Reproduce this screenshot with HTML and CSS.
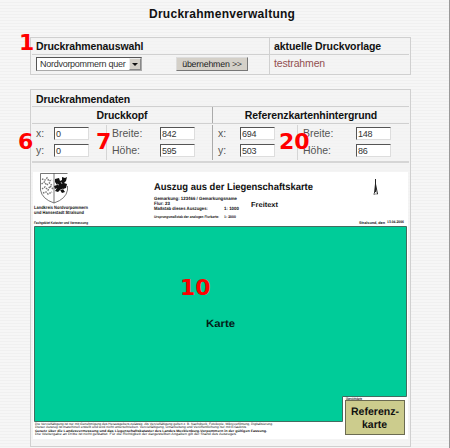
FILE: index.html
```html
<!DOCTYPE html>
<html lang="de">
<head>
<meta charset="utf-8">
<title>Druckrahmenverwaltung</title>
<link rel="stylesheet" href="styles.css">
</head>
<body>
<main class="page">
  <h1>Druckrahmenverwaltung</h1>
  <section class="panel selection">
    <div class="head cell">Druckrahmenauswahl</div>
    <div class="head cell template">aktuelle Druckvorlage</div>
    <div class="cell chooser">
      <div class="select"><span>Nordvorpommern quer</span><i class="drop"></i></div>
      <button type="button">übernehmen &gt;&gt;</button>
    </div>
    <div class="cell template name">testrahmen</div>
  </section>
  <section class="panel data">
    <div class="head data-title">Druckrahmendaten</div>
    <div class="groups">
      <div class="head group-title">Druckkopf</div>
      <div class="head group-title right">Referenzkartenhintergrund</div>
    </div>
    <div class="fields">
      <div class="pair p1"><label>x:</label><span class="input">0</span><label>y:</label><span class="input">0</span></div>
      <div class="pair p2"><label>Breite:</label><span class="input">842</span><label>Höhe:</label><span class="input">595</span></div>
      <div class="pair p3"><label>x:</label><span class="input">694</span><label>y:</label><span class="input">503</span></div>
      <div class="pair p4"><label>Breite:</label><span class="input">148</span><label>Höhe:</label><span class="input">86</span></div>
    </div>
    <div class="preview">
      <svg width="375" height="267" viewBox="33 172 375 267">
        <rect x="33" y="172" width="375" height="267" fill="#fff"/>
        <g fill="none" stroke="#555" stroke-width=".8">
          <path d="M40.500 173.500H67.500M40.500 173.500V190Q42 199 54 203Q66 199 67.500 190V186"/>
          <path d="M54 173V203"/>
        </g>
        <path d="M42 179l3 1 2-2 2 3 3-1M41.500 184l3-2 2 3 3-2 3 3M42 189l3-2 3 3 2-4 3 3M43 193l3-1 2 2 4-2" fill="none" stroke="#777" stroke-width="1.500" stroke-dasharray="1.500 1"/>
        <path d="M55 179l4-1 1 3 2-1 0-3 3 1 2-1-1 4-2 2 3 1-1 4-3 1 2 3-3 1-2-3-2 2-3-1 2-3-2 1-1-3 3-1-2-3z" fill="#111"/>
        <path d="M57 184l2 1M61 182l1 2M60 190l3-1" stroke="#fff" stroke-width=".6"/>
        <g class="tiny">
          <text x="34" y="208.500" textLength="54" lengthAdjust="spacingAndGlyphs">Landkreis Nordvorpommern</text>
          <text x="34" y="214" textLength="50" lengthAdjust="spacingAndGlyphs">und Hansestadt Stralsund</text>
        </g>
        <text class="micro" x="34" y="224" textLength="54" lengthAdjust="spacingAndGlyphs">Fachgebiet Kataster und Vermessung</text>
        <text class="map-title" x="154" y="189.500" textLength="159" lengthAdjust="spacingAndGlyphs">Auszug aus der Liegenschaftskarte</text>
        <g class="tiny">
          <text x="154" y="199.500" textLength="83" lengthAdjust="spacingAndGlyphs">Gemarkung: 123466 / Gemarkungsname</text>
          <text x="154" y="204.500" textLength="16" lengthAdjust="spacingAndGlyphs">Flur: 23</text>
          <text x="154" y="210" textLength="54" lengthAdjust="spacingAndGlyphs">Maßstab dieses Auszuges:</text>
          <text x="224" y="210" textLength="15" lengthAdjust="spacingAndGlyphs">1: 1000</text>
        </g>
        <g class="micro">
          <text x="154" y="218" textLength="65" lengthAdjust="spacingAndGlyphs">Ursprungsmaßstab der analogen Flurkarte:</text>
          <text x="224" y="217.500" textLength="12" lengthAdjust="spacingAndGlyphs">1: 2000</text>
          <text x="359" y="223.500" textLength="26" lengthAdjust="spacingAndGlyphs">Stralsund, den</text>
          <text x="387" y="223" textLength="17" lengthAdjust="spacingAndGlyphs">13.04.2006</text>
        </g>
        <text class="free" x="251" y="206.500" textLength="27" lengthAdjust="spacingAndGlyphs">Freitext</text>
        <path d="M375.500 179V192M375.500 184L374.500 193M375.500 184L377.500 194M373.500 194h2M376.500 194h1" stroke="#222" fill="none"/>
        <path d="M34.500 226.500H406.500V396.500H342.500V421.500H34.500Z" fill="#00cc99" stroke="#426c60"/>
        <text class="map-label" x="206" y="327" textLength="29" lengthAdjust="spacingAndGlyphs">Karte</text>
        <text class="micro" x="346" y="399.500" textLength="16" lengthAdjust="spacingAndGlyphs">Übersichtskarte</text>
        <g class="legal">
          <text x="35" y="425" textLength="238" lengthAdjust="spacingAndGlyphs">Die Vervielfältigung ist nur mit Genehmigung des Herausgebers zulässig. Als Vervielfältigung gelten z. B. Nachdruck, Fotokopie, Mikroverfilmung, Digitalisierung.</text>
          <text x="35" y="428.300" textLength="212" lengthAdjust="spacingAndGlyphs">Dieser Auszug ist maschinell erstellt und wird nicht unterschrieben. Vervielfältigung, Umarbeitung und Veröffentlichung nur mit Erlaubnis.</text>
          <text x="35" y="431.500" textLength="232" lengthAdjust="spacingAndGlyphs" font-weight="bold">Gesetz über die Landesvermessung und das Liegenschaftskataster des Landes Mecklenburg-Vorpommern in der gültigen Fassung.</text>
          <text x="35" y="434.800" textLength="202" lengthAdjust="spacingAndGlyphs">Die Weitergabe an Dritte ist nicht gestattet. Für die Richtigkeit der dargestellten Angaben gilt der Stand des Auszuges.</text>
        </g>
        <rect x="345.500" y="400.500" width="59" height="34" fill="#cccc8d" stroke="#6b6b51"/>
        <text class="ref" x="351" y="415" textLength="48" lengthAdjust="spacingAndGlyphs">Referenz-</text>
        <text class="ref" x="362" y="427.500" textLength="25" lengthAdjust="spacingAndGlyphs">karte</text>
      </svg>
    </div>
  </section>
  <span class="mark m1">1</span>
  <span class="mark m6">6</span>
  <span class="mark m7">7</span>
  <span class="mark m20">20</span>
  <span class="mark m10">10</span>
</main>
</body>
</html>
```
FILE: styles.css
```css
* { box-sizing: border-box; }
body {
  margin: 0;
  overflow: hidden;
  background: repeating-linear-gradient(#f6f6f6 0 2px, #f0f0f0 2px 3px);
  font: 10.5px/13px "Liberation Sans", Arial, sans-serif;
  color: #555;
}
.page {
  position: relative;
  height: 448px;
  padding: 7px 38px 0 30px;
  border-right: 1px solid #999;
}
h1 {
  margin: 0 0 16px;
  padding-left: 119px;
  font-size: 12px;
  line-height: 14px;
  letter-spacing: .26px;
  color: #111;
  white-space: nowrap;
}
.panel { border: 1px solid #d0d0d0; background: rgba(243, 243, 243, .6); }
.head { font-weight: bold; color: #111; letter-spacing: -.1px; white-space: nowrap; }
.selection {
  display: grid;
  grid-template-columns: 237px 1fr;
  grid-template-rows: 17px 19px;
  height: 38px;
  padding: 0 1px;
  margin-bottom: 14px;
}
.cell { padding: 2px 0 0 4px; }
.selection .head { border-bottom: 1px solid #d0d0d0; }
.template { border-left: 1px solid #d0d0d0; }
.name { color: #925050; letter-spacing: -.15px; }
.chooser { display: flex; gap: 34px; }
.select {
  display: flex;
  width: 106px;
  height: 14px;
  padding-left: 3px;
  border: 1px solid #aaa;
  border-top-color: #555;
  border-left-color: #555;
  background: #fff;
  color: #333;
  font-size: 9px;
  line-height: 12px;
  letter-spacing: -.27px;
  white-space: nowrap;
}
.select span { flex: 1; }
.drop { width: 12px; background: #d4d0c8; border: 1px solid #888; border-top-color: #eee; border-left-color: #eee; }
.drop::after { content: ""; display: block; margin: 4px 0 0 2px; width: 0; border: 3px solid transparent; border-top-color: #111; border-bottom: 0; }
button {
  width: 72px;
  height: 14px;
  padding: 0;
  border: 1px solid #777;
  border-top-color: #ddd;
  border-left-color: #ddd;
  background: #d4d0c8;
  color: #222;
  font: 8.8px/11px "Liberation Sans", Arial, sans-serif;
  letter-spacing: -.2px;
  text-rendering: geometricPrecision;
  white-space: nowrap;
}
.data { height: 358px; padding: 0 1px; }
.data-title { height: 17px; padding: 3px 0 0 4px; border-bottom: 1px solid #d0d0d0; }
.groups { display: grid; grid-template-columns: 180px 1fr; height: 17px; border-bottom: 1px solid #d0d0d0; }
.group-title { text-align: center; padding-top: 2px; }
.right { border-left: 1px solid #aaa; }
.fields {
  display: grid;
  grid-template-columns: 74px 106px 85px 1fr;
  height: 39px;
  padding: 1px 0;
  border-bottom: 2px solid #d6d6d6;
}
.pair { display: grid; grid-template-columns: 18px 35px; grid-template-rows: 13px 13px; row-gap: 4px; padding: 2px 0 0 4px; }
.pair + .pair { border-left: 1px solid #d5d5d5; padding-left: 5px; }
.pair.p2 { grid-template-columns: 48px 35px; }
.pair.p4 { grid-template-columns: 53px 35px; }
.pair.p3 { border-left-color: #aaa; grid-template-columns: 22px 35px; }
.input {
  height: 13px;
  padding-left: 1px;
  border: 1px solid #ddd;
  border-top: 1px solid #555;
  border-left: 1px solid #555;
  background: #fff;
  color: #333;
  font-size: 9px;
  line-height: 12px;
  letter-spacing: -.3px;
}
.preview { margin: 9px 0 0 1px; }
.preview svg { display: block; text-rendering: geometricPrecision; }
text { fill: #111; }
.tiny { font-size: 4.6px; font-weight: bold; }
.micro { font-size: 3.7px; font-weight: bold; }
.legal { font-size: 3.4px; }
.map-title { font-size: 10px; font-weight: bold; }
.free { font-size: 7.2px; font-weight: bold; }
.map-label { font-size: 10.5px; font-weight: bold; fill: #032018; }
.ref { font-size: 10.8px; font-weight: bold; }
.mark { position: absolute; font: bold 22px/22px "DejaVu Sans", Verdana, sans-serif; color: #f00; }
.m1 { left: 19px; top: 32px; }
.m6 { left: 18px; top: 131px; }
.m7 { left: 96px; top: 131px; }
.m20 { left: 279px; top: 131px; }
.m10 { left: 180px; top: 277px; }
```
